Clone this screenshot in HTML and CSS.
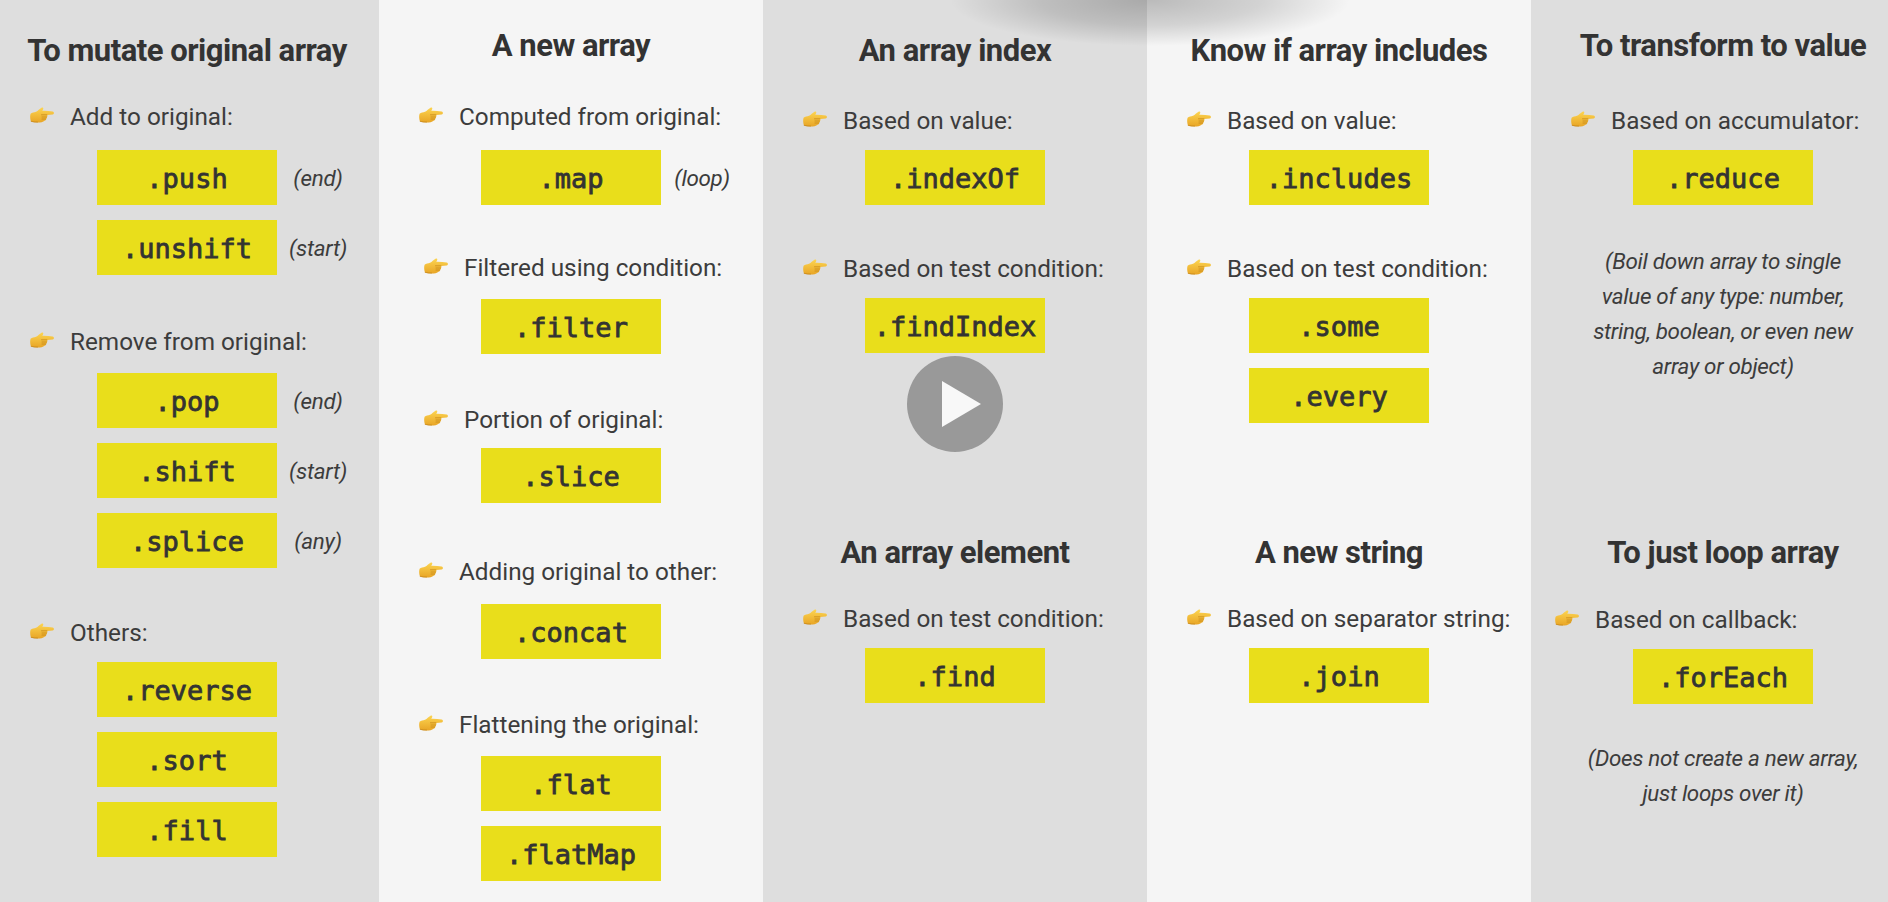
FILE: index.html
```html
<!DOCTYPE html>
<html lang="en">
<head>
<meta charset="utf-8">
<title>JavaScript array methods</title>
<link rel="stylesheet" href="styles.css">
</head>
<body>
<svg class="defs" width="0" height="0" aria-hidden="true">
  <defs>
    <linearGradient id="hand-fill" x1="0" y1="0" x2="0" y2="1">
      <stop offset="0" stop-color="#fcd450"/>
      <stop offset="1" stop-color="#e8a526"/>
    </linearGradient>
    <symbol id="hand" viewBox="0 0 24 16">
      <path fill="url(#hand-fill)" d="M.6 6.800C2 5.700 4 5.500 6 4.800 8 4 9.500 1.900 11.500.8 12.800.2 13.800 1.200 13 2.500L12.300 3.700C15.800 3.600 19.500 3.900 22.700 4.500 24.300 4.900 24.300 7.100 22.700 7.400L17.200 7.900C17.700 8.600 17.600 9.500 16.900 10 17.200 10.900 16.800 11.700 16 12 16 13 15.400 13.600 14.500 13.700 13.400 15 10.300 15.500 7.500 15.500 5 15.500 2.800 15.200 1 14.600 0 12 -.1 9 .6 6.800Z"/>
      <path fill="none" stroke="#b9780f" stroke-width=".6" stroke-linecap="round" d="M11.500 7.800H16.800M12 10H16.500M12 12H15.800M1.200 14.400C3 15 5.500 15.200 7.500 15.100"/>
    </symbol>
  </defs>
</svg>
<main class="board">
  <section class="col dark c1">
    <h2>To mutate original array</h2>
    <div class="group">
      <p class="label"><svg class="hand"><use href="#hand"/></svg>Add to original:</p>
      <div class="row"><code>.push</code><em>(end)</em></div>
      <div class="row"><code>.unshift</code><em>(start)</em></div>
    </div>
    <div class="group">
      <p class="label"><svg class="hand"><use href="#hand"/></svg>Remove from original:</p>
      <div class="row"><code>.pop</code><em>(end)</em></div>
      <div class="row"><code>.shift</code><em>(start)</em></div>
      <div class="row"><code>.splice</code><em>(any)</em></div>
    </div>
    <div class="group">
      <p class="label"><svg class="hand"><use href="#hand"/></svg>Others:</p>
      <div class="row"><code>.reverse</code></div>
      <div class="row"><code>.sort</code></div>
      <div class="row"><code>.fill</code></div>
    </div>
  </section>
  <section class="col light c2">
    <h2>A new array</h2>
    <div class="group">
      <p class="label"><svg class="hand"><use href="#hand"/></svg>Computed from original:</p>
      <div class="row"><code>.map</code><em>(loop)</em></div>
    </div>
    <div class="group">
      <p class="label inset"><svg class="hand"><use href="#hand"/></svg>Filtered using condition:</p>
      <div class="row"><code>.filter</code></div>
    </div>
    <div class="group">
      <p class="label inset"><svg class="hand"><use href="#hand"/></svg>Portion of original:</p>
      <div class="row"><code>.slice</code></div>
    </div>
    <div class="group">
      <p class="label"><svg class="hand"><use href="#hand"/></svg>Adding original to other:</p>
      <div class="row"><code>.concat</code></div>
    </div>
    <div class="group">
      <p class="label"><svg class="hand"><use href="#hand"/></svg>Flattening the original:</p>
      <div class="row"><code>.flat</code></div>
      <div class="row"><code>.flatMap</code></div>
    </div>
  </section>
  <section class="col dark c3">
    <h2>An array index</h2>
    <div class="group">
      <p class="label"><svg class="hand"><use href="#hand"/></svg>Based on value:</p>
      <div class="row"><code>.indexOf</code></div>
    </div>
    <div class="group">
      <p class="label"><svg class="hand"><use href="#hand"/></svg>Based on test condition:</p>
      <div class="row"><code>.findIndex</code></div>
    </div>
    <h2 class="second">An array element</h2>
    <div class="group">
      <p class="label"><svg class="hand"><use href="#hand"/></svg>Based on test condition:</p>
      <div class="row"><code>.find</code></div>
    </div>
  </section>
  <section class="col light c4">
    <h2>Know if array includes</h2>
    <div class="group">
      <p class="label"><svg class="hand"><use href="#hand"/></svg>Based on value:</p>
      <div class="row"><code>.includes</code></div>
    </div>
    <div class="group">
      <p class="label"><svg class="hand"><use href="#hand"/></svg>Based on test condition:</p>
      <div class="row"><code>.some</code></div>
      <div class="row"><code>.every</code></div>
    </div>
    <h2 class="second">A new string</h2>
    <div class="group">
      <p class="label"><svg class="hand"><use href="#hand"/></svg>Based on separator string:</p>
      <div class="row"><code>.join</code></div>
    </div>
  </section>
  <section class="col dark c5">
    <h2>To transform to value</h2>
    <div class="group">
      <p class="label"><svg class="hand"><use href="#hand"/></svg>Based on accumulator:</p>
      <div class="row"><code>.reduce</code></div>
      <p class="remark">(Boil down array to single<br>value of any type: number,<br>string, boolean, or even new<br>array or object)</p>
    </div>
    <h2 class="second">To just loop array</h2>
    <div class="group">
      <p class="label outset"><svg class="hand"><use href="#hand"/></svg>Based on callback:</p>
      <div class="row"><code>.forEach</code></div>
      <p class="remark">(Does not create a new array,<br>just loops over it)</p>
    </div>
  </section>
</main>
<div class="shade"></div>
<div class="play"><svg viewBox="0 0 96 96" width="96" height="96"><circle cx="48" cy="48" r="48" fill="#999"/><path d="M35 25 74 48 35 71Z" fill="#f8f8f8"/></svg></div>
</body>
</html>
```
FILE: styles.css
```css
html, body { margin: 0; height: 100%; overflow: hidden; }
body { width: 1888px; height: 902px; position: relative; font-family: Roboto, "Liberation Sans", sans-serif; color: #333; }
.defs { position: absolute; }
.board { display: grid; grid-template-columns: repeat(5, 384px); margin-left: -5px; width: 1920px; height: 902px; }
.col { padding-top: 31px; box-sizing: border-box; }
.c2, .c5 { padding-top: 26px; }
.dark { background: #dedede; }
.light { background: #f5f5f5; }
h2 { margin: 0; font-size: 31px; line-height: 40px; font-weight: 700; text-align: center; color: #333; letter-spacing: -.5px; }
.group { display: flow-root; }
.label { margin: 0 0 12px 40px; height: 36px; display: flex; align-items: center; font-size: 24.3px; color: #3c3c3c; }
.c1 .label { margin-left: 35px; }
.hand { width: 24px; height: 16px; margin: -3px 16px 0 0; flex: none; }
.label.inset { margin-left: 45px; }
.label.outset { margin-left: 24px; }
.row { display: grid; grid-template-columns: 1fr 180px 1fr; align-items: center; margin-bottom: 15px; }
.row code { grid-column: 2; height: 55px; box-sizing: border-box; padding-top: 2px; display: flex; align-items: center; justify-content: center; background: #e9de1b; font-family: "DejaVu Sans Mono", monospace; font-weight: 400; -webkit-text-stroke: .8px #333; font-size: 27px; color: #333; }
.row em { grid-column: 3; text-align: center; font-size: 22.4px; letter-spacing: -.3px; color: #3c3c3c; padding-right: 20px; }
.remark { margin: 39px 0 0; text-align: center; font-style: italic; font-size: 22.4px; letter-spacing: -.3px; line-height: 35px; color: #3c3c3c; }
.c5 .group:nth-of-type(2) .remark { margin-top: 37px; }

.c1 .group:nth-of-type(1) { margin-top: 27px; }
.c1 .group:nth-of-type(1) .label { margin-bottom: 16px; }
.c1 .group:nth-of-type(2) { margin-top: 33px; }
.c1 .group:nth-of-type(2) .label { margin-bottom: 14px; }
.c1 .group:nth-of-type(3) { margin-top: 31px; }
.c1 .group:nth-of-type(3) .label { margin-bottom: 12px; }

.c2 .group:nth-of-type(1) { margin-top: 32px; }
.c2 .group:nth-of-type(1) .label { margin-bottom: 16px; }
.c2 .group:nth-of-type(2) { margin-top: 29px; }
.c2 .group:nth-of-type(2) .label { margin-bottom: 14px; }
.c2 .group:nth-of-type(3) { margin-top: 32px; }
.c2 .group:nth-of-type(3) .label { margin-bottom: 11px; }
.c2 .group:nth-of-type(4) { margin-top: 35px; }
.c2 .group:nth-of-type(4) .label { margin-bottom: 15px; }
.c2 .group:nth-of-type(5) { margin-top: 32px; }
.c2 .group:nth-of-type(5) .label { margin-bottom: 14px; }

.c3 .group, .c4 .group { margin-top: 31px; }
.c3 .group:nth-of-type(2), .c4 .group:nth-of-type(2) { margin-top: 30px; }
.c3 .group:nth-of-type(3), .c4 .group:nth-of-type(3) { margin-top: 27px; }
.c3 .second { margin-top: 165px; }
.c4 .second { margin-top: 95px; }

.c5 .group:nth-of-type(1) { margin-top: 36px; }
.c5 .group:nth-of-type(2) { margin-top: 28px; }
.c5 .second { margin-top: 149px; }

.shade { position: absolute; left: 950px; top: -46px; width: 400px; height: 92px; border-radius: 50%; background: radial-gradient(closest-side, rgba(0,0,0,.24), rgba(0,0,0,.14) 55%, rgba(0,0,0,0)); pointer-events: none; }
.play { position: absolute; left: 907px; top: 356px; width: 96px; height: 96px; }
.play svg { display: block; }
```
